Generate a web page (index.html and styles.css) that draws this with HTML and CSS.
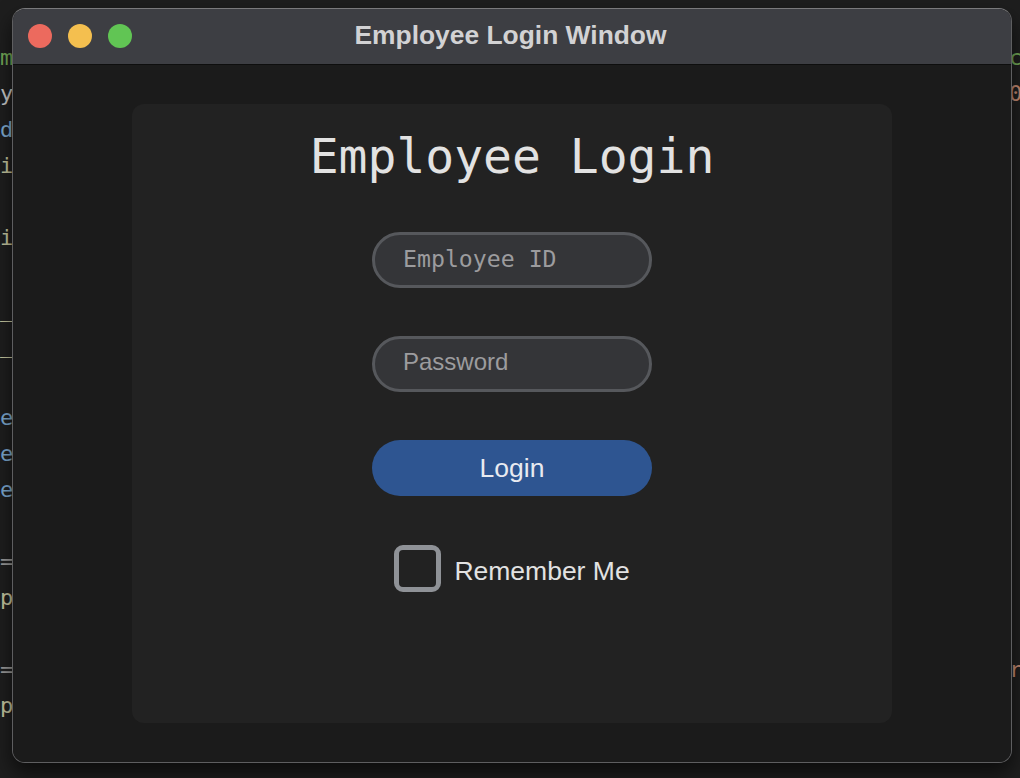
FILE: index.html
```html
<!DOCTYPE html>
<html lang="en">
<head>
<meta charset="utf-8">
<title>Employee Login Window</title>
<link rel="stylesheet" href="styles.css">
</head>
<body>
<div class="desktop">
  <div class="editor">
    <div class="gutter gutter-left">
      <div class="ln c-green">m</div>
      <div class="ln c-gray">y</div>
      <div class="ln c-blue">d</div>
      <div class="ln c-yellow">i</div>
      <div class="ln"></div>
      <div class="ln c-yellow">i</div>
      <div class="ln"></div>
      <div class="ln c-yellow">_</div>
      <div class="ln c-yellow">_</div>
      <div class="ln"></div>
      <div class="ln c-blue">e</div>
      <div class="ln c-blue">e</div>
      <div class="ln c-blue">e</div>
      <div class="ln"></div>
      <div class="ln c-dim">=</div>
      <div class="ln c-yellow">p</div>
      <div class="ln"></div>
      <div class="ln c-dim">=</div>
      <div class="ln c-yellow">p</div>
    </div>
    <div class="gutter gutter-right">
      <div class="ln c-green">c</div>
      <div class="ln c-salmon">0</div>
      <div class="ln"></div><div class="ln"></div><div class="ln"></div>
      <div class="ln"></div><div class="ln"></div><div class="ln"></div>
      <div class="ln"></div><div class="ln"></div><div class="ln"></div>
      <div class="ln"></div><div class="ln"></div><div class="ln"></div>
      <div class="ln"></div><div class="ln"></div><div class="ln"></div>
      <div class="ln c-salmon">r</div>
    </div>
  </div>

  <div class="window">
    <div class="titlebar">
      <div class="lights">
        <span class="light red"></span>
        <span class="light yellow"></span>
        <span class="light green"></span>
      </div>
      <div class="title">Employee Login Window</div>
    </div>
    <div class="content">
      <form class="card">
        <h1 class="heading">Employee Login</h1>
        <input class="field field-mono" type="text" placeholder="Employee ID">
        <input class="field field-sans" type="password" placeholder="Password">
        <button class="btn" type="button">Login</button>
        <label class="remember">
          <span class="box"></span>
          <span class="remember-text">Remember Me</span>
        </label>
      </form>
    </div>
  </div>
</div>
</body>
</html>
```

FILE: styles.css
```css
* { box-sizing: border-box; }

html, body {
  margin: 0;
  padding: 0;
  background: #1e1e1e;
}

.desktop {
  position: relative;
  width: 1020px;
  height: 778px;
  overflow: hidden;
  background: #1e1e1e;
  font-family: "Liberation Sans", Arial, sans-serif;
}

/* background editor */
.editor {
  display: flex;
  justify-content: space-between;
  padding-top: 40px;
  height: 100%;
}

.gutter {
  display: flex;
  flex-direction: column;
  font-family: "DejaVu Sans Mono", monospace;
  font-size: 22px;
  overflow: hidden;
}

.gutter-left {
  width: 13px;
  text-align: right;
}

.gutter-right {
  width: 11px;
  text-align: left;
}

.ln {
  height: 36px;
  line-height: 36px;
  white-space: nowrap;
}

.c-green { color: #72a857; }
.c-gray { color: #c8c8c8; }
.c-blue { color: #7ca8cf; }
.c-yellow { color: #c4c49e; }
.c-dim { color: #9a9a9a; }
.c-salmon { color: #c48a73; }

/* window */
.window {
  position: absolute;
  left: 12px;
  top: 8px;
  width: 1000px;
  height: 755px;
  border: 1px solid #5e5e60;
  border-top-color: #7a7a7c;
  border-radius: 13px;
  overflow: hidden;
  display: flex;
  flex-direction: column;
  background: #1b1b1b;
  box-shadow: 0 10px 20px rgba(0, 0, 0, 0.6);
}

.titlebar {
  position: relative;
  height: 56px;
  flex: 0 0 56px;
  background: #3d3e43;
  border-bottom: 1px solid #0e0e0e;
  display: flex;
  align-items: center;
  justify-content: center;
}

.lights {
  position: absolute;
  left: 15px;
  top: 15px;
  display: flex;
  gap: 16px;
}

.light {
  width: 24px;
  height: 24px;
  border-radius: 50%;
  display: block;
}

.red { background: #ec6a5e; }
.yellow { background: #f4bf4f; }
.green { background: #61c554; }

.title {
  font-family: "Liberation Sans", Arial, sans-serif;
  font-weight: bold;
  font-size: 26.4px;
  color: #d2d2d4;
  margin-top: -3px;
  margin-right: 3px;
}

.content {
  flex: 1;
  padding: 39px 119px;
  display: flex;
  background: #1b1b1b;
}

.card {
  flex: 1;
  background: #222222;
  border-radius: 12px;
  display: flex;
  flex-direction: column;
  align-items: center;
  gap: 48px;
  padding-top: 24px;
  margin: 0;
}

.heading {
  margin: 0 0 0;
  font-family: "DejaVu Sans Mono", monospace;
  font-weight: normal;
  font-size: 48px;
  line-height: 56px;
  color: #e2e2e2;
}

.field {
  width: 280px;
  height: 56px;
  border: 3px solid #56585c;
  border-radius: 28px;
  background: #343538;
  padding: 0 0 4px 28px;
  color: #e0e0e0;
  outline: none;
  margin: 0;
  flex-shrink: 0;
}

.field-mono {
  font-family: "DejaVu Sans Mono", monospace;
  font-size: 23.2px;
}

.field-sans {
  font-family: "Liberation Sans", Arial, sans-serif;
  font-size: 24px;
}

.field::placeholder {
  color: #9c9c9e;
  opacity: 1;
}

.btn {
  width: 280px;
  height: 56px;
  border: none;
  border-radius: 28px;
  background: #2e5591;
  color: #e8eaf0;
  font-family: "Liberation Sans", Arial, sans-serif;
  font-size: 26.5px;
  padding: 0;
  margin: 0;
  flex-shrink: 0;
}

.remember {
  display: flex;
  align-items: center;
  gap: 13px;
  height: 48px;
}

.box {
  width: 47px;
  height: 47px;
  flex: 0 0 47px;
  border: 5px solid #8f9297;
  border-radius: 9px;
  display: block;
}

.remember-text {
  font-family: "Liberation Sans", Arial, sans-serif;
  font-size: 26.5px;
  color: #e2e2e2;
  margin-top: 6px;
}
```
